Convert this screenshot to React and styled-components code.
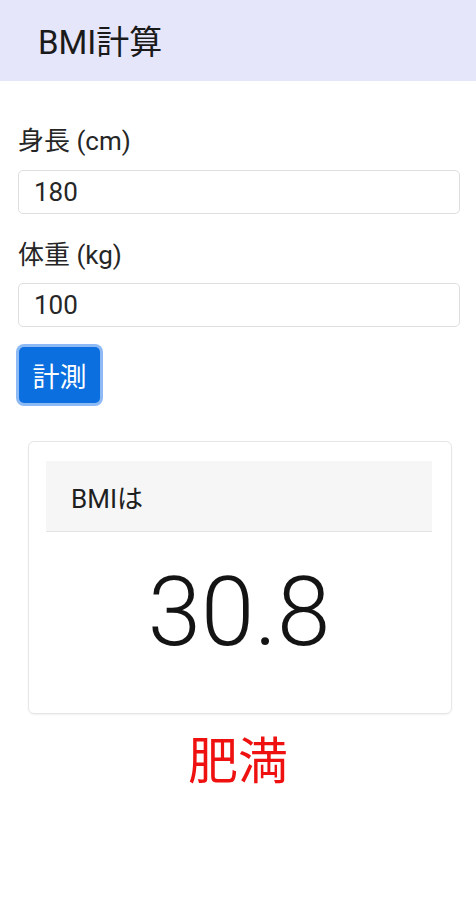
import React from "react";
import styled, { createGlobalStyle } from "styled-components";

const Global = createGlobalStyle`
  html, body { margin: 0; padding: 0; background: #fff; }
  body { font-family: Roboto, "Noto Sans CJK JP", sans-serif; color: #212529; }
  * { box-sizing: border-box; }
`;

const Header = styled.header`
  height: 81px;
  background: #e6e6fa;
  display: flex;
  align-items: center;
  padding-left: 38px;
  padding-bottom: 1px;
  font-size: 33px;
  color: #1a1a1a;
`;

const Main = styled.main`
  padding: 45px 16px 0 18px;
  display: flex;
  flex-direction: column;
`;

const Label = styled.label`
  font-size: 26px;
  line-height: 30px;
  color: #262626;
  margin-bottom: ${(p) => p.$mb}px;
`;

const Input = styled.div`
  height: 44px;
  border: 1px solid #dedede;
  border-radius: 5px;
  display: flex;
  align-items: center;
  padding-left: 15px;
  font-size: 26px;
  color: #262626;
  margin-bottom: ${(p) => p.$mb}px;
`;

const Button = styled.button`
  align-self: flex-start;
  margin-left: 1px;
  width: 81px;
  height: 56px;
  border: none;
  border-radius: 5px;
  background: #0b6fe0;
  color: #fff;
  font-family: inherit;
  font-size: 27px;
  box-shadow: 0 0 0 3px #8dbaf5;
  padding: 0;
`;

const Card = styled.section`
  margin: 38px 24px 0 28px;
  height: 273px;
  border: 1px solid #e6e6e6;
  border-radius: 6px;
  box-shadow: 0 1px 2px rgba(0, 0, 0, 0.06);
  padding: 19px 19px 0 17px;
  display: flex;
  flex-direction: column;
`;

const CardHeader = styled.div`
  height: 71px;
  background: #f6f6f6;
  border-bottom: 1px solid #e4e4e4;
  display: flex;
  align-items: center;
  padding-left: 25px;
  font-size: 26px;
  color: #1f1f1f;
`;

const Value = styled.div`
  text-align: center;
  font-size: 96px;
  font-weight: 300;
  line-height: 1;
  margin-top: 32px;
  color: #141414;
`;

const Verdict = styled.div`
  text-align: center;
  font-size: 50px;
  line-height: 60px;
  color: #ef1010;
  margin-top: 18px;
`;

export default function App() {
  return (
    <>
      <Global />
      <Header>BMI計算</Header>
      <Main>
        <Label $mb={14}>身長 (cm)</Label>
        <Input $mb={26}>180</Input>
        <Label $mb={13}>体重 (kg)</Label>
        <Input $mb={20}>100</Input>
        <Button>計測</Button>
      </Main>
      <Card>
        <CardHeader>BMIは</CardHeader>
        <Value>30.8</Value>
      </Card>
      <Verdict>肥満</Verdict>
    </>
  );
}
